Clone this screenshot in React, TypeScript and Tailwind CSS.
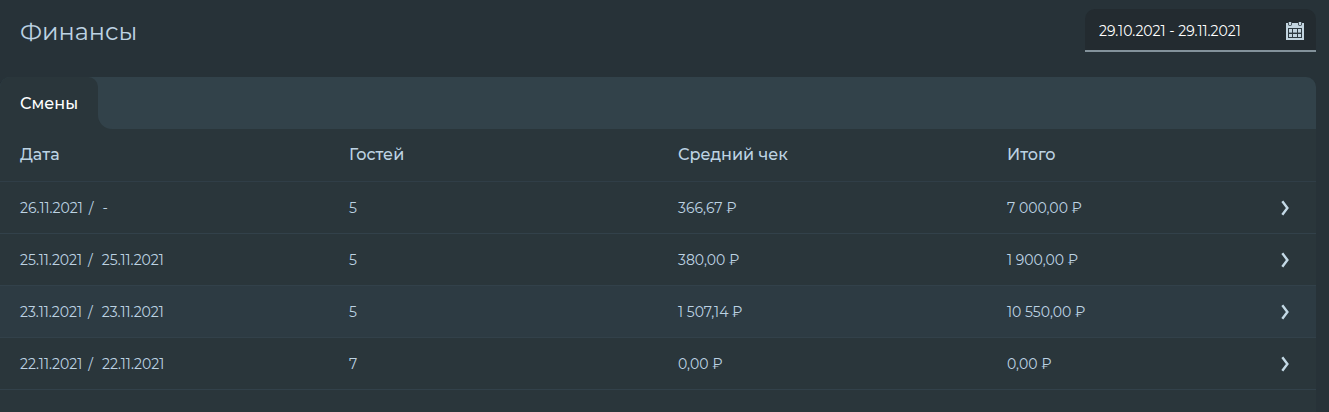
import { useState } from "react";

type Shift = {
  opened: string;
  closed: string;
  guests: number;
  average: string;
  total: string;
  active?: boolean;
};

const shifts: Shift[] = [
  { opened: "26.11.2021", closed: "-", guests: 5, average: "366,67 ₽", total: "7 000,00 ₽" },
  { opened: "25.11.2021", closed: "25.11.2021", guests: 5, average: "380,00 ₽", total: "1 900,00 ₽" },
  { opened: "23.11.2021", closed: "23.11.2021", guests: 5, average: "1 507,14 ₽", total: "10 550,00 ₽", active: true },
  { opened: "22.11.2021", closed: "22.11.2021", guests: 7, average: "0,00 ₽", total: "0,00 ₽" },
];

const columns = ["Дата", "Гостей", "Средний чек", "Итого"];

function CalendarIcon() {
  return (
    <svg viewBox="0 0 18 18" className="size-[18px]" fill="none" aria-hidden="true">
      <path d="M0 1h18v17H0z" fill="#c3d5e0" />
      <path d="M2 0h4v3q-2 2-4 0zM12 0h4v3q-2 2-4 0z" fill="#4a565e" />
      <path d="M3 0h2v3H3zM13 0h2v3h-2z" fill="#c3d5e0" />
      <path d="M2 6h14v10H2z" fill="#2f3b42" />
      <path
        d="M3 7h3v3H3zM7 7h4v3H7zM12 7h3v3h-3zM3 12h3v3H3zM7 12h4v3H7zM12 12h3v3h-3z"
        fill="#c3d5e0"
      />
      <path d="M3 10h3v1H3zM7 10h4v1H7zM12 10h3v1h-3z" fill="#8595a0" />
    </svg>
  );
}

function ChevronIcon() {
  return (
    <svg viewBox="0 0 8 16" className="h-4 w-2" fill="none" aria-hidden="true">
      <path d="M1.3 1.2 6.4 8l-5.1 6.8" stroke="#c3d9e6" strokeWidth="2.4" />
    </svg>
  );
}

export default function App() {
  const [range, setRange] = useState("29.10.2021 - 29.11.2021");

  return (
    <div className="flex min-h-screen flex-col bg-[#273238] pr-[13px] font-['Montserrat','Inter',sans-serif] text-[#bdd3e3]">
      <header className="flex items-start justify-between pt-[9px] pb-[25px] pl-5">
        <h1 className="pt-[5px] text-2xl leading-9">Финансы</h1>
        <div className="flex h-[43px] w-[231px] items-center rounded-t-[10px] border-b-2 border-[#83929b] bg-[#232b30] pt-0.5 pr-3 pl-[14px]">
          <input
            type="text"
            aria-label="Период"
            value={range}
            onChange={(e) => setRange(e.target.value)}
            className="min-w-0 flex-1 bg-transparent text-sm text-white outline-none"
          />
          <button type="button" aria-label="Открыть календарь">
            <CalendarIcon />
          </button>
        </div>
      </header>

      <main className="flex flex-1 flex-col overflow-hidden rounded-t-[10px] bg-[#2a363b]">
        <div role="tablist" className="flex h-[52px]">
          <div className="flex bg-[#32424a]">
            <button
              type="button"
              role="tab"
              aria-selected="true"
              className="rounded-tr-[10px] bg-[#2a363b] px-5 pt-px text-base font-medium text-white"
            >
              Смены
            </button>
          </div>
          <div className="flex-1 rounded-bl-[14px] bg-[#32424a]" />
        </div>

        <table className="w-full table-fixed border-collapse text-left">
          <thead>
            <tr className="h-[52px] border-b border-[#303e47]">
              {columns.map((name) => (
                <th key={name} scope="col" className="pl-5 text-base font-medium">
                  {name}
                </th>
              ))}
            </tr>
          </thead>
          <tbody>
            {shifts.map((shift) => (
              <tr
                key={shift.opened}
                className={`h-[52px] border-b border-[#32414a] text-sm hover:bg-[#2d3b43] ${shift.active ? "bg-[#2d3b43]" : ""}`}
              >
                <td className="pt-px pl-5">
                  <span>{shift.opened}</span>
                  <span className="mr-[9px] ml-[6px]">/</span>
                  <span>{shift.closed}</span>
                </td>
                <td className="pt-px pl-5">{shift.guests}</td>
                <td className="pt-px pl-5">{shift.average}</td>
                <td className="pt-px pr-[27px] pl-5">
                  <div className="flex items-center justify-between">
                    <span>{shift.total}</span>
                    <button type="button" aria-label="Подробнее" className="pt-px">
                      <ChevronIcon />
                    </button>
                  </div>
                </td>
              </tr>
            ))}
          </tbody>
        </table>
      </main>
    </div>
  );
}
